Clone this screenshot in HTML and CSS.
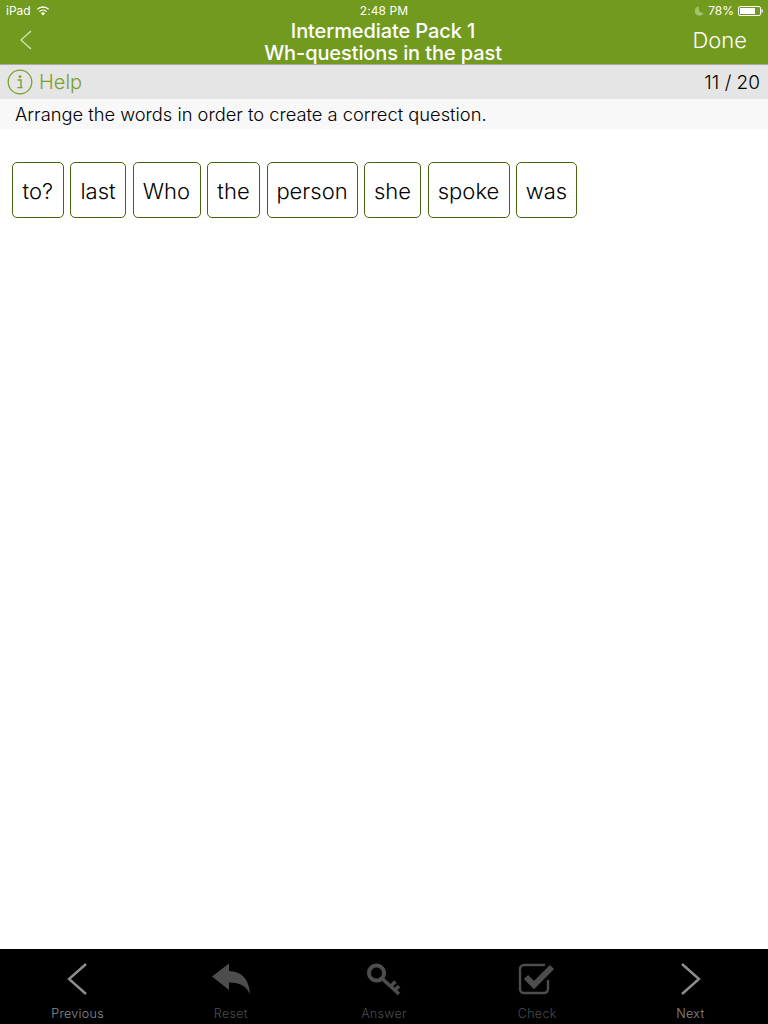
FILE: index.html
```html
<!DOCTYPE html>
<html lang="en">
<head>
    <meta charset="UTF-8">
    <meta name="viewport" content="width=device-width, initial-scale=1.0">
    <title>Intermediate Pack 1</title>
    <link rel="stylesheet" href="styles.css">
</head>
<body>
    <div class="app">
        <header class="header">
            <div class="status-bar">
                <div class="status-left">
                    <span>iPad</span>
                    <svg class="wifi" width="14" height="10" viewBox="0 0 14 10">
                        <path d="M7 9.5 L4.9 7.2 A3 3 0 0 1 9.1 7.2 Z" fill="#fff"/>
                        <path d="M3.4 5.6 A5.2 5.2 0 0 1 10.6 5.6" fill="none" stroke="#fff" stroke-width="1.3"/>
                        <path d="M1.2 3.4 A8.2 8.2 0 0 1 12.8 3.4" fill="none" stroke="#fff" stroke-width="1.3"/>
                    </svg>
                </div>
                <div class="status-time">2:48 PM</div>
                <div class="status-right">
                    <svg width="9" height="10" viewBox="0 0 9 10">
                        <path d="M4 0.5 A4.6 4.6 0 1 0 8.6 7 A4.6 4.6 0 0 1 4 0.5 Z" fill="#a5c26c"/>
                    </svg>
                    <span class="battery-pct">78%</span>
                    <svg width="25" height="10" viewBox="0 0 25 10">
                        <rect x="0.5" y="0.5" width="22" height="9" rx="1.5" fill="none" stroke="#fff"/>
                        <rect x="2" y="2" width="15" height="6" fill="#fff"/>
                        <rect x="23.5" y="3.2" width="1.2" height="3.6" fill="#fff"/>
                    </svg>
                </div>
            </div>
            <div class="nav-bar">
                <svg class="nav-back" width="13" height="20" viewBox="0 0 13 20">
                    <path d="M12 1 L2 10 L12 19" fill="none" stroke="#cfdcb0" stroke-width="1.5"/>
                </svg>
                <div class="nav-title">
                    <div>Intermediate Pack 1</div>
                    <div>Wh-questions in the past</div>
                </div>
                <div class="nav-done">Done</div>
            </div>
        </header>

        <div class="help-bar">
            <div class="help">
                <svg width="26" height="26" viewBox="0 0 26 26">
                    <circle cx="13" cy="13" r="11.8" fill="none" stroke="#7aa02c" stroke-width="1.3"/>
                    <circle cx="13" cy="7.6" r="1.4" fill="#7aa02c"/>
                    <path d="M10.6 11 H14 V18.6 H15.6 M10.4 18.6 H15.6 M10.6 11 H12" fill="none" stroke="#7aa02c" stroke-width="1.4"/>
                </svg>
                <span>Help</span>
            </div>
            <div class="counter">11 / 20</div>
        </div>
        <div class="instruction">Arrange the words in order to create a correct question.</div>

        <main class="words">
            <div class="word w-to">to?</div>
            <div class="word w-last">last</div>
            <div class="word w-who">Who</div>
            <div class="word w-the">the</div>
            <div class="word w-person">person</div>
            <div class="word w-she">she</div>
            <div class="word w-spoke">spoke</div>
            <div class="word w-was">was</div>
        </main>

        <footer class="toolbar">
            <div class="tool">
                <svg width="40" height="36" viewBox="0 0 40 36">
                    <path d="M28 3 L11 18 L28 33" fill="none" stroke="#8e8e8e" stroke-width="2.4"/>
                </svg>
                <span>Previous</span>
            </div>
            <div class="tool tool-off">
                <svg width="40" height="36" viewBox="0 0 40 36">
                    <path d="M1 15.5 L18 2.5 V10 C31 10 38 19 39 33 C35 25 29 21.5 18 21.5 V29 Z" fill="#4d4d4d"/>
                </svg>
                <span>Reset</span>
            </div>
            <div class="tool tool-off">
                <svg width="40" height="36" viewBox="0 0 40 36">
                    <circle cx="12.5" cy="12" r="7.6" fill="none" stroke="#4d4d4d" stroke-width="4" transform="rotate(40 12.5 12)"/>
                    <path d="M18 17.5 L35 33 M27 25 L31.5 20.5 M31 29 L35 25" fill="none" stroke="#4d4d4d" stroke-width="3.6"/>
                </svg>
                <span>Answer</span>
            </div>
            <div class="tool tool-off">
                <svg width="40" height="36" viewBox="0 0 40 36">
                    <path d="M31 19 V28 A4 4 0 0 1 27 32 H7 A4 4 0 0 1 3 28 V8 A4 4 0 0 1 7 4 H28" fill="none" stroke="#4d4d4d" stroke-width="2.4"/>
                    <path d="M9 16 L17 24 L35 6" fill="none" stroke="#4d4d4d" stroke-width="6"/>
                </svg>
                <span>Check</span>
            </div>
            <div class="tool">
                <svg width="40" height="36" viewBox="0 0 40 36">
                    <path d="M12 3 L29 18 L12 33" fill="none" stroke="#8e8e8e" stroke-width="2.4"/>
                </svg>
                <span>Next</span>
            </div>
        </footer>
    </div>
</body>
</html>
```
FILE: styles.css
```css
body {
    margin: 0;
    padding: 0;
    font-family: Inter, "Noto Sans", sans-serif;
    background-color: #fff;
    color: #000;
    overflow: hidden;
}

.app {
    display: flex;
    flex-direction: column;
    height: 1024px;
}

.header {
    height: 64px;
    background-color: #729a1e;
    border-bottom: 1px solid #a9a9a9;
    color: #fff;
}

.status-bar {
    display: grid;
    grid-template-columns: 1fr auto 1fr;
    align-items: center;
    height: 20px;
    padding: 1px 6px 0;
    box-sizing: border-box;
    font-size: 12px;
}

.status-left {
    display: flex;
    align-items: center;
    gap: 5px;
}

.status-time {
    letter-spacing: 0.1px;
}

.status-right {
    display: flex;
    align-items: center;
    justify-content: flex-end;
    gap: 4px;
    margin-right: -1px;
}

.nav-bar {
    display: grid;
    grid-template-columns: 1fr auto 1fr;
    align-items: center;
    height: 44px;
    padding: 0 21px 0 19px;
}

.nav-back {
    margin-top: -4px;
}

.nav-title {
    text-align: center;
    font-size: 20px;
    font-weight: 450;
    line-height: 22px;
    letter-spacing: -0.1px;
}

.nav-done {
    justify-self: end;
    font-size: 22px;
    font-weight: 300;
    margin-top: -4px;
}

.help-bar {
    display: flex;
    justify-content: space-between;
    align-items: center;
    height: 34px;
    padding: 0 8px 0 7px;
    background-color: #e5e5e5;
}

.help {
    display: flex;
    align-items: center;
    gap: 6px;
    color: #7aa02c;
    font-size: 20px;
    font-weight: 300;
}

.counter {
    font-size: 19px;
    font-weight: 350;
}

.instruction {
    height: 30px;
    line-height: 31px;
    padding-left: 15px;
    background-color: #f8f8f8;
    font-size: 18.3px;
    font-weight: 350;
}

.words {
    flex: 1;
    display: flex;
    align-items: flex-start;
    gap: 6.5px;
    padding: 33px 12px 0;
}

.word {
    display: flex;
    justify-content: center;
    align-items: center;
    box-sizing: border-box;
    height: 56px;
    padding-top: 2px;
    border: 1px solid #44660f;
    border-radius: 5px;
    font-size: 22px;
    font-weight: 350;
}

.w-to { width: 51.5px; }
.w-last { width: 56px; }
.w-who { width: 68px; }
.w-the { width: 53px; }
.w-person { width: 91px; }
.w-she { width: 57px; }
.w-spoke { width: 82px; }
.w-was { width: 61px; }

.toolbar {
    display: grid;
    grid-template-columns: repeat(5, 1fr);
    height: 75px;
    background-color: #000;
    color: #8e8e8e;
    padding: 0 1px;
}

.tool {
    display: flex;
    flex-direction: column;
    align-items: center;
    padding-top: 12px;
    font-size: 12.5px;
    font-weight: 350;
    letter-spacing: 0.3px;
}

.tool svg {
    margin-bottom: 9px;
}

.tool-off {
    color: #4d4d4d;
}
```
